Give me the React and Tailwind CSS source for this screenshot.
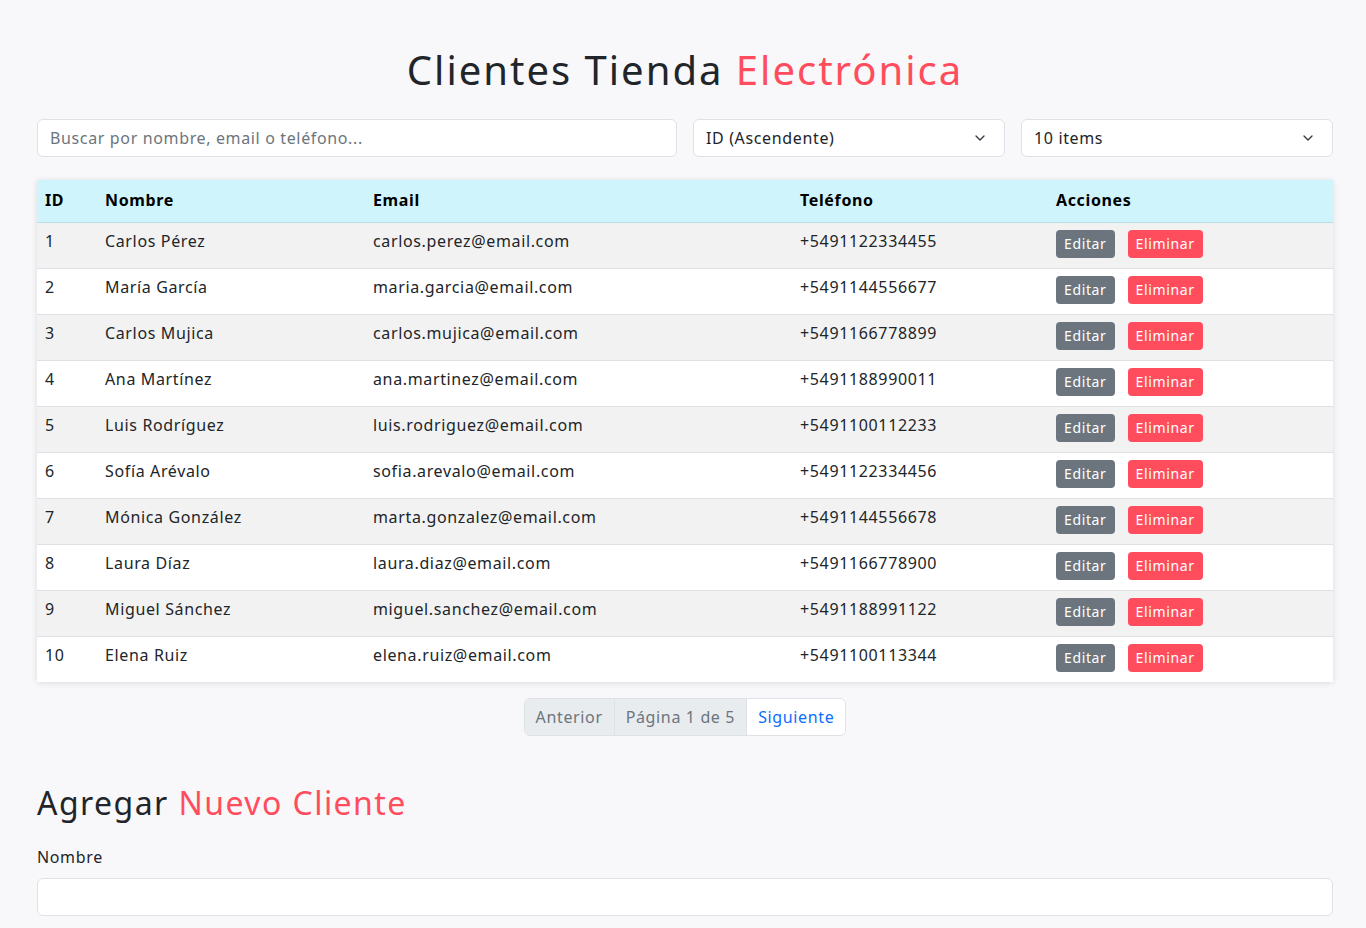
import { ChevronDown } from 'lucide-react';

const clientes = [
  { id: 1, nombre: 'Carlos Pérez', email: 'carlos.perez@email.com', telefono: '+5491122334455' },
  { id: 2, nombre: 'María García', email: 'maria.garcia@email.com', telefono: '+5491144556677' },
  { id: 3, nombre: 'Carlos Mujica', email: 'carlos.mujica@email.com', telefono: '+5491166778899' },
  { id: 4, nombre: 'Ana Martínez', email: 'ana.martinez@email.com', telefono: '+5491188990011' },
  { id: 5, nombre: 'Luis Rodríguez', email: 'luis.rodriguez@email.com', telefono: '+5491100112233' },
  { id: 6, nombre: 'Sofía Arévalo', email: 'sofia.arevalo@email.com', telefono: '+5491122334456' },
  { id: 7, nombre: 'Mónica González', email: 'marta.gonzalez@email.com', telefono: '+5491144556678' },
  { id: 8, nombre: 'Laura Díaz', email: 'laura.diaz@email.com', telefono: '+5491166778900' },
  { id: 9, nombre: 'Miguel Sánchez', email: 'miguel.sanchez@email.com', telefono: '+5491188991122' },
  { id: 10, nombre: 'Elena Ruiz', email: 'elena.ruiz@email.com', telefono: '+5491100113344' },
];

function Select({ value }) {
  return (
    <div className="flex h-[38px] items-center justify-between rounded-md border border-[#dee2e6] bg-white pl-3 pr-4 text-[#212529]">
      <span>{value}</span>
      <ChevronDown className="h-4 w-4 text-[#343a40]" strokeWidth={2} />
    </div>
  );
}

export default function App() {
  return (
    <div className="min-h-screen bg-[#f8f7fa] font-['Noto_Sans',sans-serif] text-base tracking-[0.04em] text-[#212529]">
      <div className="ml-[37px] w-[1296px] pb-10">
        <h1 className="pt-[46px] text-center text-[40px] leading-[48px] tracking-[0.05em]">
          Clientes Tienda <span className="text-[#ff4d5e]">Electrónica</span>
        </h1>

        <div className="mt-[25px] grid grid-cols-[640px_312px_312px] gap-4">
          <div className="flex h-[38px] items-center rounded-md border border-[#dee2e6] bg-white px-3 text-[#6c757d]">
            Buscar por nombre, email o teléfono...
          </div>
          <Select value="ID (Ascendente)" />
          <Select value="10 items" />
        </div>

        <div className="mt-[23px] shadow-[0_1px_6px_rgba(0,0,0,0.12)]">
          <table className="w-full table-fixed border-collapse">
            <colgroup>
              <col className="w-[60px]" />
              <col className="w-[268px]" />
              <col className="w-[427px]" />
              <col className="w-[256px]" />
              <col />
            </colgroup>
            <thead>
              <tr className="h-[42px] border-b border-[#badce3] bg-[#cff4fc] text-left text-black">
                <th className="px-2 pb-[2px] font-bold">ID</th>
                <th className="px-2 pb-[2px] font-bold">Nombre</th>
                <th className="px-2 pb-[2px] font-bold">Email</th>
                <th className="px-2 pb-[2px] font-bold">Teléfono</th>
                <th className="px-2 pb-[2px] font-bold">Acciones</th>
              </tr>
            </thead>
            <tbody>
              {clientes.map((c, i) => (
                <tr
                  key={c.id}
                  className={`h-[46px] border-b border-[#dee2e6] last:border-b-0 ${i % 2 === 0 ? 'bg-[#f2f2f2]' : 'bg-white'}`}
                >
                  <td className="px-2 pt-[6px] pb-[10px] align-top leading-6">{c.id}</td>
                  <td className="px-2 pt-[6px] pb-[10px] align-top leading-6">{c.nombre}</td>
                  <td className="px-2 pt-[6px] pb-[10px] align-top leading-6">{c.email}</td>
                  <td className="px-2 pt-[6px] pb-[10px] align-top leading-6">{c.telefono}</td>
                  <td className="px-2 pt-[7px] align-top">
                    <div className="flex gap-[13px]">
                      <button className="h-7 rounded bg-[#6c757d] px-2 text-sm text-white">Editar</button>
                      <button className="h-7 rounded bg-[#ff4d5e] px-2 text-sm text-white">Eliminar</button>
                    </div>
                  </td>
                </tr>
              ))}
            </tbody>
          </table>
        </div>

        <div className="mt-4 flex justify-center">
          <div className="flex h-[38px] overflow-hidden rounded-md border border-[#dee2e6]">
            <div className="flex items-center border-r border-[#dee2e6] bg-[#e9ecef] px-[11px] text-[#6c757d]">Anterior</div>
            <div className="flex items-center border-r border-[#dee2e6] bg-[#e9ecef] px-[11px] text-[#6c757d]">Página 1 de 5</div>
            <div className="flex items-center bg-white px-[11px] text-[#0d6efd]">Siguiente</div>
          </div>
        </div>

        <h2 className="mt-[48px] text-[32px] leading-[38px] tracking-[0.045em]">
          Agregar <span className="text-[#ff4d5e]">Nuevo Cliente</span>
        </h2>

        <div className="mt-[23px]">
          <label className="block leading-6">Nombre</label>
          <div className="mt-[9px] h-[38px] rounded-md border border-[#dee2e6] bg-white" />
        </div>
      </div>
    </div>
  );
}
